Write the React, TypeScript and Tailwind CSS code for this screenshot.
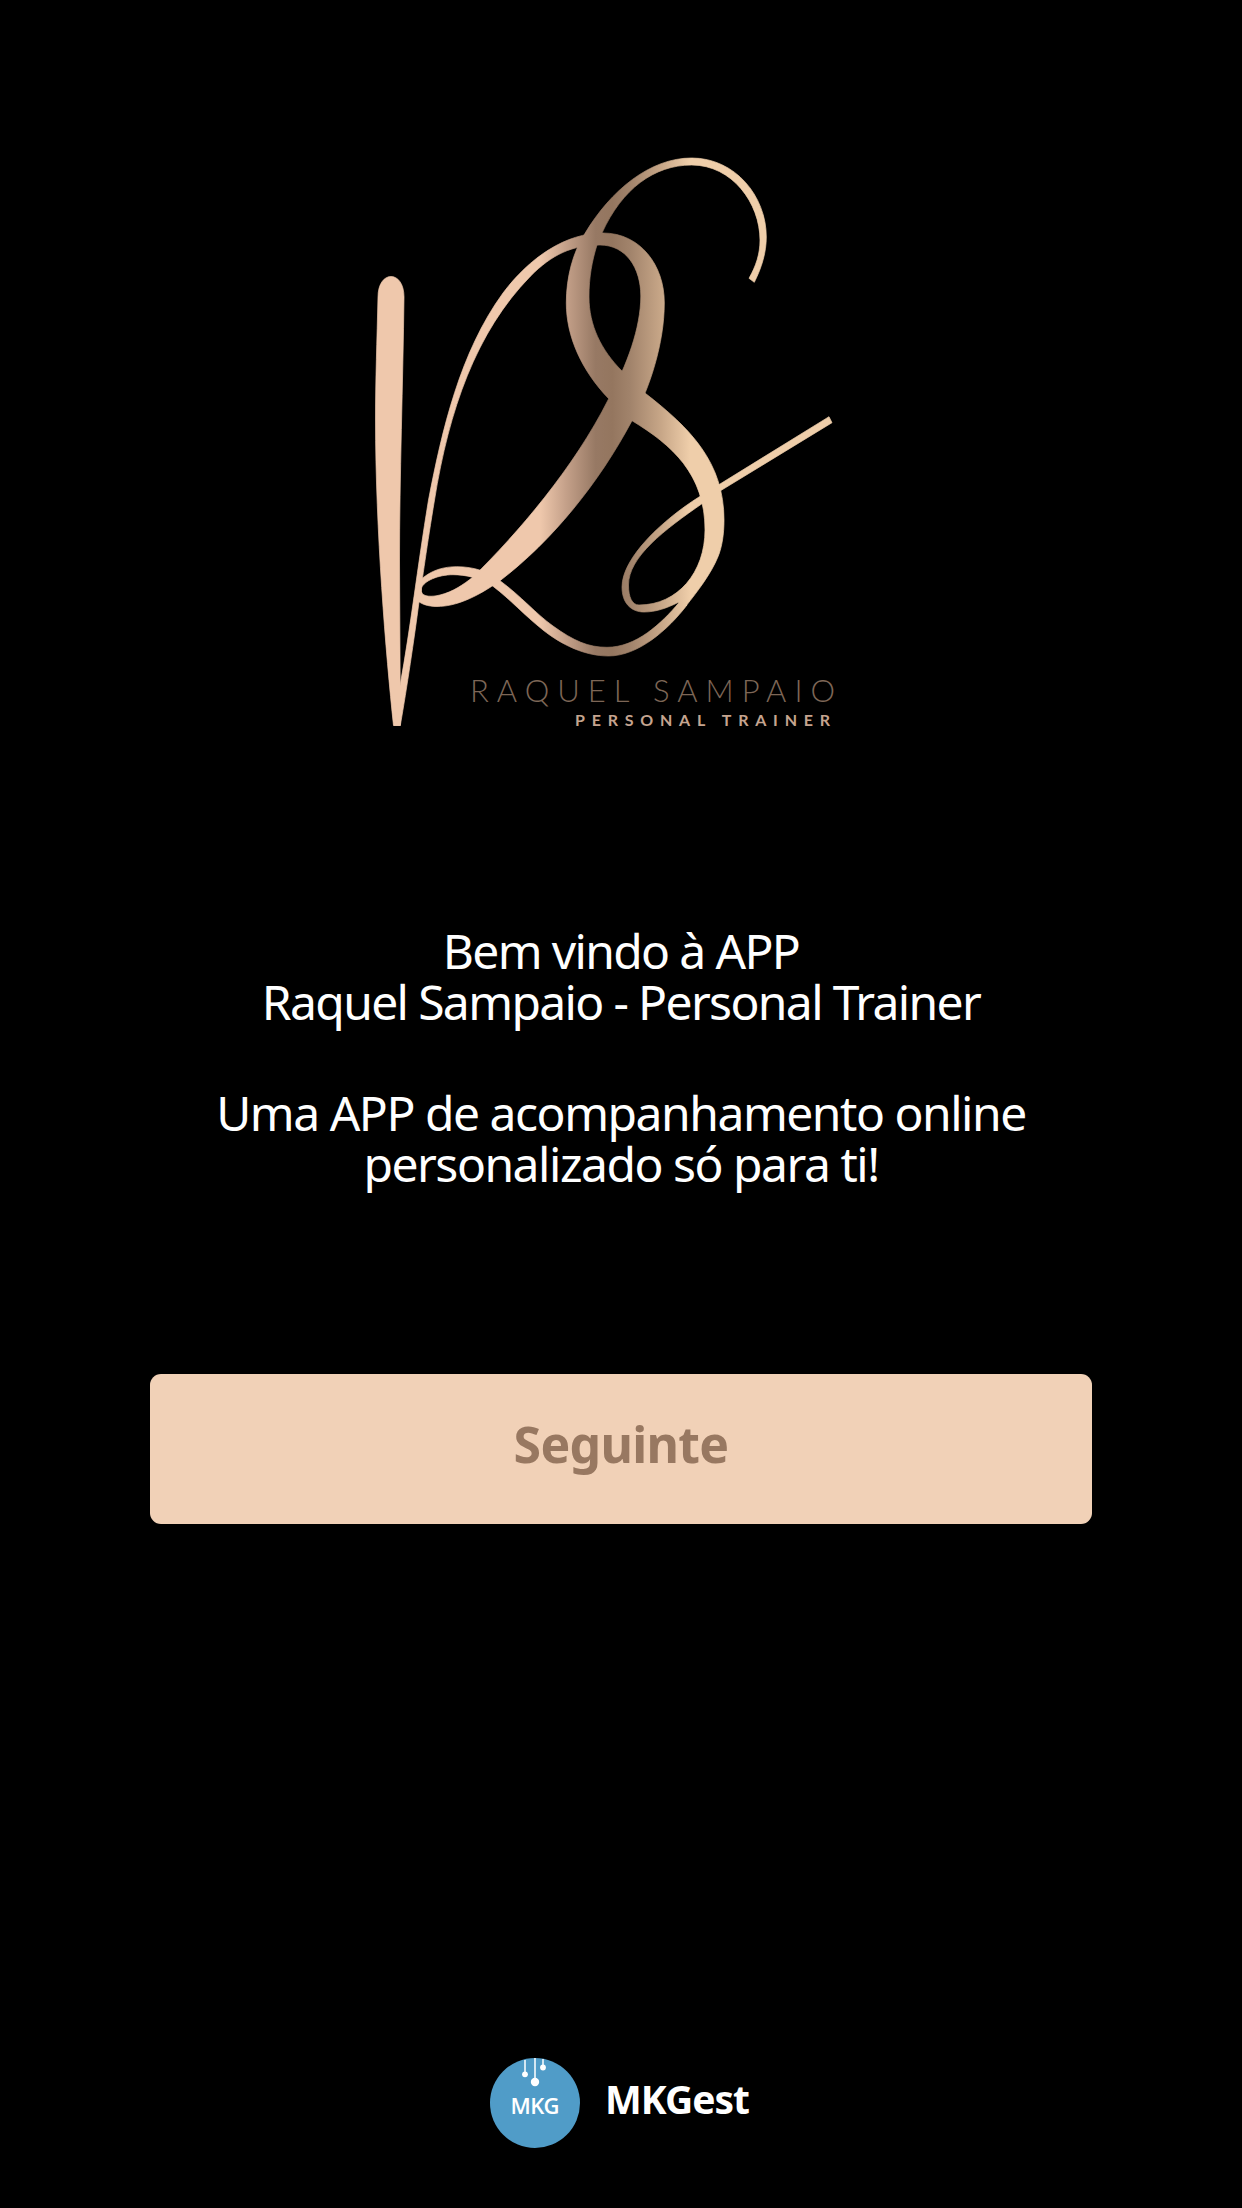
// ─── Logo shapes ───────────────────────────────────────────────────────────

const LOGO_PATHS = [
  // R: stem
  'M378 297C378 284 384 276.5 391 276.5C398 276.5 404 284 404 297C403 380 399.5 480 399.5 560L400.2 690L400.3 725.5H393.5C386 655 375.5 530 375.5 420C375.5 380 377 340 378 297Z',
  // R: upstroke, bowl and leg
  'M394 725.5L400 686C411 625 417 570 428.5 500C442 430 460 352 503 293C530 257 566 233 603 233C640 233 664.5 265 664.3 303C664.3 343 650 388 632 420.7C599 483 552 541 500 580.7C477 597 456 606.5 437 606.5C428 606.5 420 604 416 599L421.5 592C423 597 432 597 440 595C453 592 464 584 472.7 577.3C517 534 574 468 608.7 398.7C627 365 640.8 328 640.8 296C640.8 268 626 245 600 245C573 245 552 254 530 276.7C476 332 449 410 434.5 500C427 545 422 582 419 602C414 640 407 687 400.3 725.5Z',
  // knot and the tail running under the S
  'M421.5 594C414 587 417 582 424 577C433 570 444 566.7 456.7 566.7C474 566.7 488 571.5 500 580.7C522 597 535 613 553 626C574 641 588 647.3 607 647.3C636 647.3 661 624 679.3 602.3L687 605C668 630 638 656 608.5 656C585 656 562 645 543 630C523 614 511 600 492.7 586C480 578 466 574.7 453 574.7C438 574.7 424 581 421.5 588Z',
  // S: top arc, body, loop and exit stroke
  'M754.3 282.3C762 267 766.3 252 766.3 237C766.3 196 735 158 691.7 158C650 158 611 190 585 233.3C573 252 566.3 277 566.3 303C566.3 337 582 371 608.7 398.7L632 420.7C672 445 705 474 705 530C705 572 678 605 639 605C632 605 628.5 597 628.5 585C628.5 557 664 530 703 503L721.7 490L832 422.7L829 416.7L720 484L699 497C664 519 622 557 622 587C622 603 631 612 644 612C656 612 667 608 678 602.5L686 606C697 592 711 574 718 556.7C722 547 724 534 724 520C724 462 690 428 645.3 393.3L622 371C601 350 589 325 589 297C589 277 592 261 597 245L602 233C622 189 654 165 691.7 165C732 165 760 203 760 240C760 254 756 266 749 278.3Z',
]

export default function App() {
  return (
    <main className="flex h-[2208px] w-full flex-col items-center bg-black pt-[140px] font-['Noto_Sans',sans-serif] text-white">
      <BrandLogo />

      {/* Welcome text */}
      <section className="mt-[185px] text-center text-[48px] leading-[51px] whitespace-nowrap">
        <p className="tracking-[-1.65px]">
          Bem vindo à APP
          <br />
          Raquel Sampaio - Personal Trainer
        </p>
        <p className="mt-[60px] tracking-[-1.48px]">
          Uma APP de acompanhamento online
          <br />
          personalizado só para ti!
        </p>
      </section>

      <button className="mt-[185px] flex h-[150px] w-[942px] items-center justify-center rounded-[11px] bg-[#f1d1b7] pb-2.5 text-[50px] font-bold tracking-[-0.7px] text-[#987861]">
        Seguinte
      </button>

      {/* Footer */}
      <footer className="mt-auto mr-[3px] mb-[60px] flex items-center gap-[25px]">
        <MkgBadge />
        <span className="pb-[10px] text-[39px] leading-none font-bold tracking-[-1px]">MKGest</span>
      </footer>
    </main>
  )
}

// ─── Raquel Sampaio logo ───────────────────────────────────────────────────

function BrandLogo() {
  return (
    <svg viewBox="360 140 522 600" className="h-[600px] w-[522px] shrink-0">
      <defs>
        <linearGradient id="roseGold" gradientUnits="userSpaceOnUse" x1="540" y1="0" x2="690" y2="0">
          <stop offset="0" stopColor="#efc8ac" />
          <stop offset="0.17" stopColor="#c5a18a" />
          <stop offset="0.37" stopColor="#977964" />
          <stop offset="0.48" stopColor="#94765f" />
          <stop offset="0.6" stopColor="#a1836b" />
          <stop offset="0.81" stopColor="#c8a788" />
          <stop offset="1" stopColor="#efceaa" />
        </linearGradient>
      </defs>
      {LOGO_PATHS.map((d) => (
        <path key={d} d={d} fill="url(#roseGold)" stroke="url(#roseGold)" strokeWidth="0.7" />
      ))}
      <text x="470" y="702" textLength="365" className="fill-[#7d6656] font-['Lato',sans-serif] text-[31px] font-light">
        RAQUEL SAMPAIO
      </text>
      <text x="575" y="726" textLength="255" className="fill-[#c5a48f] font-['Lato',sans-serif] text-[16px] font-bold">
        PERSONAL TRAINER
      </text>
    </svg>
  )
}

// ─── MKG badge ─────────────────────────────────────────────────────────────

function MkgBadge() {
  return (
    <svg viewBox="0 0 90 90" className="h-[90px] w-[90px]">
      <circle cx="45" cy="45" r="45" fill="#509cc8" />
      <path d="M35 2V16M45 0V24M53 1V9" stroke="#fff" strokeWidth="1.5" />
      <g fill="#fff">
        <circle cx="35" cy="16.3" r="2.9" />
        <circle cx="45" cy="24" r="4.2" />
        <circle cx="53" cy="9.5" r="2.9" />
      </g>
      <text x="20.5" y="56" textLength="49" className="fill-white font-['Open_Sans',sans-serif] text-[22px] font-semibold">
        MKG
      </text>
    </svg>
  )
}
